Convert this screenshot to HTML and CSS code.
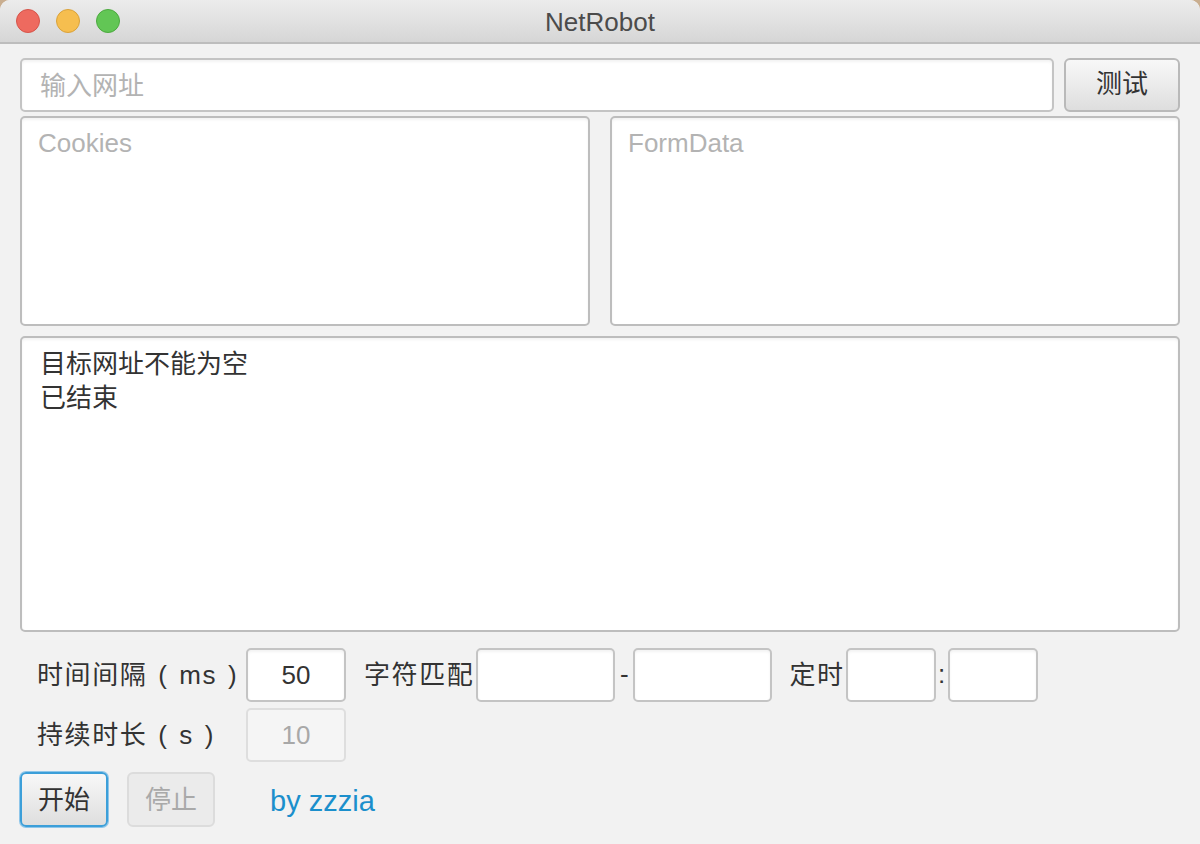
FILE: index.html
```html
<!DOCTYPE html>
<html lang="zh">
<head>
<meta charset="utf-8">
<title>NetRobot</title>
<link rel="stylesheet" href="styles.css">
</head>
<body>
<div class="window">
  <header class="titlebar">
    <div class="lights">
      <span class="light red"></span>
      <span class="light yellow"></span>
      <span class="light green"></span>
    </div>
    <div class="title">NetRobot</div>
    <div></div>
  </header>
  <main class="content">
    <div class="url-row">
      <input class="field url" type="text" placeholder="输入网址">
      <button class="btn test-btn">测试</button>
    </div>
    <div class="text-row">
      <textarea class="area" placeholder="Cookies"></textarea>
      <textarea class="area" placeholder="FormData"></textarea>
    </div>
    <div class="log">
      <div>目标网址不能为空</div>
      <div>已结束</div>
    </div>
    <div class="controls">
      <div class="ctl-row">
        <span class="label first">时间间隔 ( ms )</span>
        <input class="field small num" type="text" value="50">
        <span class="label match">字符匹配</span>
        <input class="field mid" type="text">
        <span class="sep dash">-</span>
        <input class="field mid" type="text">
        <span class="label timer">定时</span>
        <input class="field tiny" type="text">
        <span class="sep colon">:</span>
        <input class="field tiny" type="text">
      </div>
      <div class="ctl-row">
        <span class="label first">持续时长 ( s )</span>
        <input class="field small num" type="text" value="10" disabled>
      </div>
      <div class="btn-row">
        <button class="btn action focused">开始</button>
        <button class="btn action" disabled>停止</button>
        <span class="credit">by zzzia</span>
      </div>
    </div>
  </main>
</div>
</body>
</html>
```
FILE: styles.css
```css
html {
  background: #c9ae90;
}
body {
  margin: 0;
  font-family: "Liberation Sans", "Noto Sans CJK SC", sans-serif;
  color: #333333;
}
.window {
  width: 1200px;
  height: 844px;
  background: #f2f2f2;
  border-radius: 10px 10px 0 0;
  overflow: hidden;
  display: flex;
  flex-direction: column;
}
.titlebar {
  height: 42px;
  border-bottom: 2px solid #bdbdbd;
  background: linear-gradient(#ececec, #d6d6d6);
  display: grid;
  grid-template-columns: 1fr auto 1fr;
  align-items: center;
}
.lights {
  display: flex;
  gap: 16px;
  padding-left: 16px;
}
.light {
  width: 22px;
  height: 22px;
  border-radius: 50%;
  border: 1px solid;
}
.red { background: #ee6a5f; border-color: #d5544a; }
.yellow { background: #f6be4f; border-color: #d9a23b; }
.green { background: #62c655; border-color: #4ca93f; }
.title {
  font-size: 26px;
  color: #4b4b4b;
  padding-top: 2px;
}
.content {
  padding: 14px 20px 0;
  display: flex;
  flex-direction: column;
}
.field, .area, .log {
  box-sizing: border-box;
  border: 2px solid #c4c4c4;
  border-radius: 5px;
  background: #ffffff;
  box-shadow: inset 0 2px 3px rgba(0, 0, 0, 0.05);
  font-family: "Liberation Sans", "Noto Sans CJK SC", sans-serif;
  font-size: 26px;
  color: #333333;
  outline: none;
  margin: 0;
}
.field::placeholder, .area::placeholder {
  color: #b3b3b3;
  opacity: 1;
}
.url-row {
  display: flex;
  gap: 10px;
  height: 54px;
}
.url {
  flex: 1;
  height: 54px;
  padding: 2px 18px 0;
}
.btn {
  box-sizing: border-box;
  border: 2px solid #b9b9b9;
  border-radius: 6px;
  background: linear-gradient(#f8f8f8, #dedede);
  font-family: "Liberation Sans", "Noto Sans CJK SC", sans-serif;
  font-size: 26px;
  color: #333333;
  padding: 0 0 4px;
  margin: 0;
}
.test-btn {
  width: 116px;
  height: 54px;
  padding-bottom: 7px;
}
.text-row {
  margin-top: 4px;
  height: 210px;
  display: grid;
  grid-template-columns: 1fr 1fr;
  gap: 20px;
}
.area {
  resize: none;
  height: 210px;
  padding: 10px 16px;
  line-height: 30px;
  border-color: #bdbdbd;
}
.log {
  margin-top: 10px;
  height: 296px;
  padding: 9px 18px;
  line-height: 34px;
  border-color: #bdbdbd;
}
.controls {
  margin-top: 16px;
  display: flex;
  flex-direction: column;
}
.ctl-row {
  display: flex;
  align-items: center;
  height: 54px;
}
.ctl-row + .ctl-row {
  margin-top: 6px;
}
.label {
  font-size: 26px;
  color: #333333;
  white-space: pre;
  letter-spacing: 1.6px;
  word-spacing: 2px;
  padding-bottom: 6px;
}
.label.first {
  box-sizing: border-box;
  width: 226px;
  padding-left: 17px;
}
.field.small {
  width: 100px;
  height: 54px;
  text-align: center;
  padding: 0;
}
.field.small:disabled {
  background: #f5f5f5;
  border-color: #dedede;
  color: #a8a8a8;
  box-shadow: none;
}
.label.match {
  margin-left: 18px;
  margin-right: 2px;
}
.field.mid {
  width: 139px;
  height: 54px;
  padding: 0 10px;
}
.sep {
  font-size: 26px;
  width: 18px;
  text-align: center;
  padding-bottom: 2px;
}
.label.timer {
  margin-left: 17px;
  margin-right: 1px;
}
.field.tiny {
  width: 90px;
  height: 54px;
  padding: 0 10px;
}
.sep.colon {
  width: 12px;
}
.btn-row {
  margin-top: 10px;
  display: flex;
  align-items: center;
  gap: 19px;
}
.action {
  width: 88px;
  height: 55px;
}
.action.focused {
  border: 2px solid #3c9fd9;
  box-shadow: 0 0 0 1px #8ec6ea;
}
.action:disabled {
  background: #ebebeb;
  border-color: #dcdcdc;
  color: #a9a9a9;
}
.credit {
  margin-left: 36px;
  font-size: 29px;
  color: #1b8fcc;
  padding-top: 4px;
}
```
